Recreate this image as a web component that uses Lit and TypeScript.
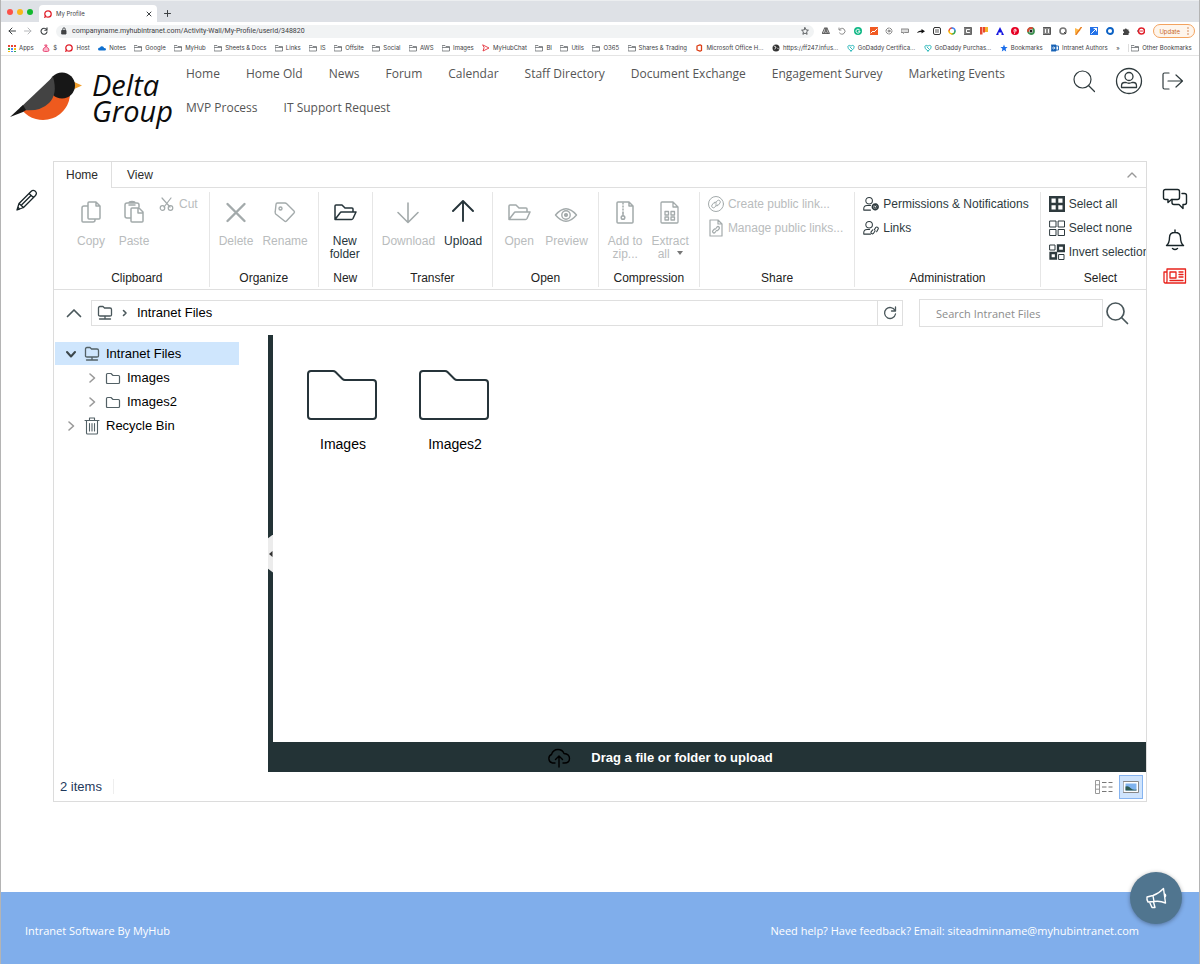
import { LitElement, html, css, svg, nothing, TemplateResult, SVGTemplateResult } from "lit";
import { customElement } from "lit/decorators.js";
import { classMap } from "lit/directives/class-map.js";

/* ---------- icons ---------- */

const draw = (w: number, h: number, body: SVGTemplateResult, width = 1): TemplateResult => html`
  <svg width=${w} height=${h} viewBox="0 0 ${w} ${h}" fill="none" stroke="currentColor"
    stroke-width=${width} stroke-linecap="round" stroke-linejoin="round" aria-hidden="true">${body}</svg>`;

const icons = {
  copy: () => draw(22, 24, svg`<path d="M9 2h7l4 4v12a1 1 0 0 1-1 1H9a1 1 0 0 1-1-1V3a1 1 0 0 1 1-1zM16 2v4h4M8 6H4a2 2 0 0 0-2 2v13a1 1 0 0 0 1 1h10a2 2 0 0 0 2-2v-1"/>`, 1.5),
  paste: () => draw(22, 24, svg`<path d="M8 18H4a2 2 0 0 1-2-2V5a2 2 0 0 1 2-2h10a2 2 0 0 1 2 2v2M6 5h6M6 3a3 1.500 0 0 1 6 0M9 8h7l4 4v9a1 1 0 0 1-1 1H9a1 1 0 0 1-1-1V9a1 1 0 0 1 1-1zM15 8v5h5"/>`, 1.5),
  cut: () => draw(16, 16, svg`<path d="M3 2l8 9M12 2L5 11"/><circle cx="3.500" cy="12" r="2.300"/><circle cx="11.500" cy="12" r="2.300"/>`, 1.2),
  remove: () => draw(22, 24, svg`<path d="M2.500 4l17 17M19.500 4L2.500 21"/>`, 2.4),
  tag: () => draw(24, 24, svg`<path d="M3 4.500q0-1.500 1.500-1.500H12q1 0 1.700.7l7.300 7.300q1 1 0 2l-7.500 8q-1 1-2 0L2.700 14q-.7-1-.5-2z"/><circle cx="7.500" cy="8.500" r="1.500"/>`, 1.4),
  folderOpen: () => draw(24, 24, svg`<path d="M2 19V6q0-1 1-1h6l3 3h7q1 0 1 1v3M2 19.500h16.500q1 0 1.500-1l3-6.500H8.500q-1 0-1.500 1z"/>`, 1.5),
  down: () => draw(24, 24, svg`<path d="M12 3v19M2 12.500l10 10 10-10"/>`, 1.6),
  up: () => draw(24, 24, svg`<path d="M12 21V1.200M2 11l10-10 10 10"/>`, 1.9),
  eye: () => draw(24, 24, svg`<path d="M1.500 15Q12 2.500 22.500 15 12 27.500 1.500 15z"/><circle cx="12" cy="15" r="4.200"/><circle cx="12" cy="15" r="1.400" fill="currentColor"/>`, 1.4),
  zip: () => draw(22, 24, svg`<path d="M4 2h11l4 4v16a1 1 0 0 1-1 1H4a1 1 0 0 1-1-1V3a1 1 0 0 1 1-1zM15 2v4h4"/><path d="M9 3v10" stroke-dasharray="1 2"/><path d="M9 13v3"/><circle cx="9" cy="17.500" r="1.800"/>`, 1.5),
  extract: () => draw(22, 24, svg`<path d="M3 2h11l5 5v15a1 1 0 0 1-1 1H3a1 1 0 0 1-1-1V3a1 1 0 0 1 1-1zM14 2v5h5"/><path d="M6 11.500h3.500v3.500H6zM12 11.500h3.500v3.500H12zM6 17h3.500v3H6zM12 17h3.500v3H12z"/>`, 1.3),
  linkCircle: () => draw(16, 18, svg`<circle cx="8" cy="9" r="7.500"/><path d="M7 8.500l2.500-3a1.800 1.800 0 0 1 2.500 2.500L10 10.500q-1.500 1-2.500-.5M9 9.500l-2.500 3A1.800 1.800 0 0 1 4 10l2-2.500q1.500-1 2.500.5"/>`),
  linkPage: () => draw(16, 18, svg`<path d="M2 1h8l4 4v12H2zM10 1v4h4"/><path d="M7.500 10l1.500-2a1.300 1.300 0 0 1 2 2l-1.500 1.700M8.500 11.500l-1.500 2a1.300 1.300 0 0 1-2-2L6.500 10"/>`, 1.2),
  userGear: () => draw(17, 16, svg`<circle cx="6.500" cy="4.500" r="3.500"/><path d="M8 14.500H.8V13q0-3.500 3.500-3.500H8"/><circle cx="13" cy="11" r="3" stroke-width="1.800" stroke-dasharray="1.600 .8"/><circle cx="13" cy="11" r="1.400"/>`, 1.1),
  userLink: () => draw(17, 16, svg`<circle cx="6.500" cy="4.500" r="3.500"/><path d="M8 14.500H.8V13q0-3.500 3.500-3.500H7"/><path d="M12 10l1.500-2.500a1.500 1.500 0 0 1 2.300 2L14.500 12M13 11l-2 2.800a1.500 1.500 0 0 1-2.200-2L10.300 10"/>`, 1.1),
  selectAll: () => draw(16, 16, svg`<path d="M1.200 1.200h13.600v13.600H1.200zM8 1v14M1 8h14" stroke-width="2.600" stroke-linejoin="miter"/>`),
  selectNone: () => draw(16, 16, svg`<path d="M1 1h6v6H1zM9.500 1h6v6h-6zM1 9.500h6v6H1zM9.500 9.500h6v6h-6z"/>`, 1),
  invert: () => draw(16, 16, svg`<path d="M1 1h5v5H1zM10 10.500h5v5h-5z"/><path d="M9 1.500h6v5.500H9zM1.500 9h5.500v5.500H1.500z" stroke-width="2.300" stroke-linejoin="miter"/>`, 1),
  network: () => draw(16, 16, svg`<path d="M1.500 10V3q0-1.500 1.500-1.500h3l1.500 1.500H13q1.500 0 1.500 1.500V10q0 1-1.500 1H3q-1.500 0-1.500-1zM8 11v3M2.500 14h11"/>`, 1.3),
  folder: () => draw(16, 16, svg`<path d="M1.500 12.500v-8q0-1 1-1h3.500l2 2h5.500q1 0 1 1v6q0 1-1 1h-11q-1 0-1-1z"/>`, 1.2),
  bin: () => draw(16, 18, svg`<path d="M1 3.500h14M2.500 3.500V16q0 1 1 1h9q1 0 1-1V3.500M5.500 3V1h5v2M5.500 6.500v7.500M8 6.500v7.500M10.500 6.500v7.500"/>`, 1.1),
  bigFolder: () => draw(75, 52, svg`<path d="M2 47V5q0-3 3-3h22q1.500 0 2.500 1l7 7q1 1 2.500 1h28q3 0 3 3v33q0 3-3 3H5q-3 0-3-3z"/>`, 2),
  chevUp: () => draw(16, 10, svg`<path d="M1.500 8.500L8 2l6.500 6.500"/>`, 1.7),
  chevSmallUp: () => draw(10, 8, svg`<path d="M1 6l4-4 4 4"/>`, 1.4),
  chevRight: () => draw(10, 12, svg`<path d="M3 2l4.500 4L3 10"/>`, 1.6),
  chevDown: () => draw(10, 12, svg`<path d="M1 4l4 4.500L9 4"/>`, 2),
  crumb: () => draw(6, 8, svg`<path d="M1.500 1.500L4 4 1.500 6.500"/>`, 1.6),
  refresh: () => draw(14, 14, svg`<path d="M12 4.500A5.500 5.500 0 1 0 12.500 8M12.500 1v4h-4"/>`, 1.3),
  magnifier: (width = 1.5) => draw(24, 24, svg`<circle cx="10.500" cy="10.500" r="8.500"/><path d="M16.500 16.500l6 6"/>`, width),
  user: () => draw(28, 28, svg`<circle cx="14" cy="14" r="12.500"/><circle cx="14" cy="9.500" r="4"/><path d="M6.500 20.500v-1.500q0-3.500 3-3.500h1.500q3 1.500 6 0h1.500q3 0 3 3.500v1.500z"/>`, 1.3),
  logout: () => draw(22, 18, svg`<path d="M7 1H2.500Q1 1 1 2.500v13Q1 17 2.500 17H7M6 9h14.500M14 3l6.500 6-6.500 6"/>`, 1.2),
  pencil: () => draw(22, 22, svg`<path d="M1 21l2-6.500L15 2.500q2-2 4-.5 2.500 2 .5 4.500L7.500 18.500zM3 14.500l4.500 4M13 4.500l4.500 4M5.500 16l9.500-9.500M1 21l2.500-.8-1.500-2z"/>`, 1.3),
  chat: () => draw(26, 24, svg`<path d="M3.500 1.500h12q2 0 2 2v6q0 2-2 2h-6L6 14.500v-3H3.500q-2 0-2-2v-6q0-2 2-2z"/><path d="M20 5.500h2.500q2 0 2 2v7q0 2-2 2h-1.500v4l-4-4h-5q-2 0-2-2v-3"/>`, 1.4),
  bell: () => draw(20, 22, svg`<path d="M10 1v2M1.500 16.500q3-2.500 3-8 0-5 5.500-5t5.500 5q0 5.500 3 8zM7.500 19.500q2.500 2 5 0"/>`, 1.4),
  news: () => draw(24, 16, svg`<path d="M4 1h18.500v14H3q-2 0-2-1.500V4h3zM4 4v9q0 1.500-1 2M7 4h6v6H7zM16 4h4M16 6.500h4M16 9h4M7 12.500h13"/>`, 1.3),
  cloud: () => draw(24, 20, svg`<path d="M8 15H5.500a4.500 4.500 0 0 1-1-8.500Q6 1.500 11 1.500q4.500 0 6 4 5.500.5 5.500 5 0 4.500-5 4.500H16M12 19V8.500M8.500 11.500L12 8l3.500 3.500"/>`, 1.4),
  list: () => draw(18, 14, svg`<g stroke-linecap="butt"><path d="M.5.500h4v13h-4zM.5 4.800h4M.5 9.200h4" stroke="#999" /><path d="M7 2.500h4.500M13.500 2.500h4M7 7h4.500M13.500 7h4M7 11.500h4.500M13.500 11.500h4" stroke="#777"/></g>`, 1),
  thumbs: () => draw(16, 12, svg`<path d="M.5.500h15v11H.5z" fill="#fff" stroke="#888"/><path d="M2.500 2.500h11v7h-11z" fill="#7fb3ee" stroke="none"/><path d="M2.500 9.500V5.500q3-1 5 1.500t6 1.500v1z" fill="#2f5b52" stroke="none"/>`, 1),
  horn: () => draw(22, 22, svg`<path d="M2 10l6-1.500Q14 6.500 18.500 1.500l2 14.500Q15 13.500 9 14.500l-6 .5q-1.500-2-1-5zM8 8.500l1 6M4.500 15l2.500 5.500h3L8.500 15M19.500 7q2 1 .5 3"/>`, 1.4),
  bird: () => html`<svg width="72" height="52" viewBox="0 0 72 52" aria-hidden="true">
    <path d="M62 9l10 4.500-10 4.500z" fill="#f2a02e"/>
    <path d="M60 20A27 27 0 0 1 12 38L44 14z" fill="#ee5a1e"/>
    <circle cx="52" cy="13.500" r="13" fill="#171717"/>
    <path d="M43 4.700Q48 22 39 31 30 40 13 38L10 36z" fill="#434343"/>
    <path d="M0 45l13-12 3 5-3 2z" fill="#171717"/></svg>`,
};

/* ---------- browser glyphs ---------- */

type Mark = "apps" | "bag" | "ring" | "drive" | "folder" | "play" | "office" | "globe" | "heart" | "star" | "blue";

const mark = (kind: Mark): TemplateResult => {
  const shapes: Record<Mark, SVGTemplateResult> = {
    apps: svg`<g fill="#e94335" stroke="none"><path d="M0 1h2v2H0zM3 1h2v2H3zM6 1h2v2H6z"/><path fill="#34a853" d="M0 4h2v2H0zM6 7h2v1H6z"/><path fill="#4285f4" d="M3 4h2v2H3zM3 7h2v1H3z"/><path fill="#fbbc05" d="M6 4h2v2H6zM0 7h2v1H0z"/></g>`,
    bag: svg`<path d="M3 1h2L4.500 3Q7 4 7 6q0 1.500-1.500 1.500h-3Q1 7.500 1 6q0-2 2.500-3z" fill="#fbb6cb" stroke="#e8436f"/>`,
    ring: svg`<circle cx="4" cy="4" r="3.200" stroke="#e0202b" stroke-width="1.300"/><path d="M.8 7.500l.8-2" stroke="#e0202b" stroke-width="1.300"/>`,
    drive: svg`<path d="M1.500 6.500Q0 6.500 0 5t2-1.500Q3 1.500 5 2.500q1 .5 1 1.500 2 0 2 1.300T6.500 6.500z" fill="#0f70d0" stroke="none"/>`,
    folder: svg`<path d="M.5 1.500h2.500l1 1h3.500v4.500h-7zM.5 3.500h7" stroke="#6b6e72" stroke-width=".8"/>`,
    play: svg`<path d="M1 1l6 3-6 3 1-3z" stroke="#e3323c" />`,
    office: svg`<path d="M2 2l3-1.200L6.500 1.500v5L5 7.200 2 6z" stroke="#dc3e15" stroke-width="1.300"/>`,
    globe: svg`<circle cx="4" cy="4" r="3.500" fill="#333" stroke="none"/><path d="M2 2l2 1-1 2M5.500 4l1 1" stroke="#fff" stroke-width=".8"/>`,
    heart: svg`<path d="M4 7Q0 4.500.8 2.300 2 .5 4 2 6 .5 7.200 2.300 8 4.500 4 7zM3 3l2 2" stroke="#26b5b8"/>`,
    star: svg`<path d="M4 .5l1 2.400 2.600.2-2 1.700.6 2.600L4 6 1.800 7.400l.6-2.600-2-1.700L3 2.900z" fill="#1a6dea" stroke="none"/>`,
    blue: svg`<path d="M.5 1h4.500v6h-4.500z" fill="#1762b5" stroke="#1762b5"/><circle cx="2.700" cy="4" r="1" stroke="#fff" stroke-width=".7"/><path d="M5.500 2h2v4h-2" stroke="#1762b5"/>`,
  };
  return draw(8, 8, shapes[kind], 0.9);
};

const bookmarks: [Mark, string][] = [
  ["apps", "Apps"], ["bag", "$"], ["ring", "Host"], ["drive", "Notes"], ["folder", "Google"], ["folder", "MyHub"],
  ["folder", "Sheets & Docs"], ["folder", "Links"], ["folder", "IS"], ["folder", "Offsite"], ["folder", "Social"],
  ["folder", "AWS"], ["folder", "Images"], ["play", "MyHubChat"], ["folder", "BI"], ["folder", "Utils"],
  ["folder", "O365"], ["folder", "Shares & Trading"], ["office", "Microsoft Office H..."], ["globe", "https://ff247.infus..."],
  ["heart", "GoDaddy Certifica..."], ["heart", "GoDaddy Purchas..."], ["star", "Bookmarks"], ["blue", "Intranet Authors"],
];

const extensions: SVGTemplateResult[] = [
  svg`<path d="M3 1h2l2.500 5.500h-7zM3 1l2.500 5.500M5 1L2.500 6" fill="#bbb" stroke="#555" stroke-width=".9"/>`,
  svg`<path d="M1.500 2.500A3 3 0 1 1 1.500 6M1 1v2h2" stroke="#888"/>`,
  svg`<circle cx="4" cy="4" r="4" fill="#11b886" stroke="none"/><path d="M5.500 2.800A2 2 0 1 0 6 4.200H4.500" stroke="#fff"/>`,
  svg`<path d="M0 0h8v8H0z" fill="#f15a22" stroke="none"/><path d="M1 6l2-2 1 1 3-3" stroke="#fff"/>`,
  svg`<circle cx="4" cy="4" r="3" stroke="#888" stroke-dasharray="2 1"/><circle cx="4" cy="4" r="1" stroke="#777"/>`,
  svg`<path d="M.5 2h7v3.500h-4l-1 1v-1h-2z" fill="#ddd" stroke="#888"/>`,
  svg`<path d="M0 6Q1 3.500 4.500 3.500V2L8 4.300 4.500 6.500V5Q2 5 0 6z" fill="#111" stroke="none"/>`,
  svg`<rect x=".5" y=".5" width="7" height="7" rx="1.500" stroke="#333"/><path d="M3 2.500v3M5 2.500v3" stroke="#555"/>`,
  svg`<path d="M1 4a3 3 0 0 1 3-3" stroke="#ea4335" stroke-width="1.400"/><path d="M4 1a3 3 0 0 1 3 3" stroke="#4285f4" stroke-width="1.400"/><path d="M7 4a3 3 0 0 1-3 3" stroke="#34a853" stroke-width="1.400"/><path d="M4 7a3 3 0 0 1-3-3" stroke="#fbbc05" stroke-width="1.400"/>`,
  svg`<path d="M.5.500h7v7h-7z" fill="#777" stroke="#666"/><path d="M5.500 2.500h-3v3h3" stroke="#fff"/>`,
  svg`<path d="M0 0h2.500v7.500H0zM3 0h2v5.500H3z" fill="#e8492f" stroke="none"/><path d="M5 0h3v5H5z" fill="#f5b32a" stroke="none"/>`,
  svg`<path d="M4 0l4 8H5.500V5.500h-3V8H0z" fill="#1414e0" stroke="none"/>`,
  svg`<circle cx="4" cy="4" r="4" fill="#e60023" stroke="none"/><path d="M3.500 6.500L4.500 3M3 4.500Q2.500 2 4 2t1.300 2" stroke="#fff" stroke-width=".8"/>`,
  svg`<circle cx="4" cy="4" r="3" stroke="#3c8f4f" stroke-width="1.800"/><path d="M1 4a3 3 0 0 1 4-2.800" stroke="#e24331" stroke-width="1.800"/><circle cx="4" cy="4" r="1.500" fill="#222" stroke="none"/>`,
  svg`<path d="M.5.500h7v7h-7z" fill="#888" stroke="#555"/><path d="M2.500 2.500v3M5.500 2.500v3" stroke="#fff"/>`,
  svg`<circle cx="4" cy="4" r="3" stroke="#777" stroke-width="1.600"/><path d="M5.500 5.500l1 1" stroke="#222"/>`,
  svg`<path d="M1 1l5.500 2.500L1 7z" fill="#fdb94a" stroke="none"/><path d="M7.500 0L2 7.500" stroke="#e77b1c" stroke-width="1.400"/>`,
  svg`<path d="M0 0h8v8H0z" fill="#2472e8" stroke="none"/><path d="M1.500 6.500l5-5M4 1.500h2.500V4" stroke="#fff"/>`,
  svg`<circle cx="4" cy="4" r="3" stroke="#0b61c4" stroke-width="1.900"/>`,
  svg`<path d="M1 2.500h1.500a1.300 1.300 0 0 1 2.500 0h1.500v1.500a1.300 1.300 0 0 1 0 2.500V8H1V6.300a1 1 0 0 0 0-2z" fill="#444" stroke="none"/>`,
  svg`<circle cx="4.500" cy="4" r="3" stroke="#e0202b" stroke-width="1.600"/><path d="M-.5 4h1" stroke="#333"/><path d="M3.500 4h2" stroke="#e0202b"/>`,
];

@customElement("browser-bar")
class BrowserBar extends LitElement {
  static styles = css`
    :host { display: block; font-family: Inter, Roboto, "Liberation Sans", sans-serif; color: #3c4043; }
    button, a, input { font: inherit; color: inherit; }
    button { border: 0; background: none; padding: 0; display: flex; align-items: center; }
    svg { flex: none; display: block; }
    .tabs { display: flex; align-items: flex-end; height: 22px; box-sizing: border-box; background: #dee1e6; border-top: 1px solid #eceef0; padding-left: 6px; }
    .lights { display: flex; gap: 4px; padding: 0 6px 7px 0; }
    .light { width: 6px; height: 6px; border-radius: 50%; }
    .red { background: #fc5149; } .amber { background: #f9b71a; } .green { background: #12b82e; }
    .tab { display: flex; align-items: center; gap: 4px; height: 17px; width: 118px; box-sizing: border-box; padding: 0 5px; background: #fff; border-radius: 4px 4px 0 0; font-size: 6px; }
    .tab span { flex: 1; }
    .new { height: 17px; padding-left: 7px; }
    .tools { display: flex; align-items: center; gap: 8px; height: 18px; padding: 0 4px 0 7px; background: #fff; }
    .omni { flex: 1; display: flex; align-items: center; gap: 5px; height: 13px; border-radius: 7px; background: #f1f3f4; padding: 0 5px; }
    .omni input { flex: 1; min-width: 0; border: 0; padding: 0; background: none; outline: 0; font-family: Roboto, sans-serif; font-size: 7px; }
    .extensions { display: flex; justify-content: space-between; width: 323px; }
    .update { box-sizing: border-box; height: 14px; border: 1px solid #f3a35f; border-radius: 7px; background: #fef5ec; color: #c7682a; font-size: 6px; padding: 0 5px; gap: 7px; }
    .marks { display: flex; align-items: center; justify-content: space-between; height: 15px; padding: 0 7px; background: #fff; border-bottom: 1px solid #e4e4e4; font-size: 6px; white-space: nowrap; }
    .marks a { display: flex; align-items: center; gap: 3px; text-decoration: none; }
    .last { border-left: 1px solid #ddd; padding-left: 2px; }
  `;
  render() {
    return html`
      <div class="tabs">
        <div class="lights"><i class="light red"></i><i class="light amber"></i><i class="light green"></i></div>
        <div class="tab">${mark("ring")}<span>My Profile</span>
          <button aria-label="Close tab">${draw(6, 6, svg`<path d="M1 1l4 4M5 1L1 5"/>`, 1)}</button></div>
        <button class="new" aria-label="New tab">${draw(7, 7, svg`<path d="M3.500.500v6M.5 3.500h6"/>`, 1)}</button>
      </div>
      <div class="tools">
        <button aria-label="Back">${draw(8, 8, svg`<path d="M7.500 4h-6.500M4 1L1 4l3 3"/>`, 1)}</button>
        <button aria-label="Forward">${draw(8, 8, svg`<path d="M.5 4h6.500M4 1l3 3-3 3" stroke="#b5b7ba"/>`, 1)}</button>
        <button aria-label="Reload">${draw(8, 8, svg`<path d="M6.500 2.500A3 3 0 1 0 7 4.800M7 .8v2.400H4.800"/>`, 1.1)}</button>
        <div class="omni">
          ${draw(6, 8, svg`<path d="M1 3.500h4v3.500H1z" fill="#444"/><path d="M1.800 3.500V2a1.200 1.200 0 0 1 2.400 0v1.500"/>`, 0.9)}
          <input aria-label="Address" value="companyname.myhubintranet.com/Activity-Wall/My-Profile/userId/348820" />
          ${draw(8, 8, svg`<path d="M4 .7l1 2.200 2.400.3-1.800 1.600.5 2.500L4 6.100 1.900 7.300l.5-2.500L.6 3.200 3 2.900z"/>`, 0.8)}
        </div>
        <div class="extensions">${extensions.map((e) => draw(8, 8, e, 1))}</div>
        <button class="update">Update ${draw(2, 8, svg`<path d="M1 1v0M1 4v0M1 7v0"/>`, 1.4)}</button>
      </div>
      <nav class="marks" aria-label="Bookmarks">
        ${bookmarks.map(([k, t]) => html`<a href="#">${mark(k)}${t}</a>`)}
        <span>»</span>
        <a class="last" href="#">${mark("folder")}Other Bookmarks</a>
      </nav>`;
  }
}

/* ---------- file manager ---------- */

interface Cmd { icon: () => TemplateResult; text: string; off?: boolean; menu?: boolean; }
interface Group { name: string; large?: Cmd[]; small?: Cmd[]; }

const groups: Group[] = [
  { name: "Clipboard", large: [{ icon: icons.copy, text: "Copy", off: true }, { icon: icons.paste, text: "Paste", off: true }], small: [{ icon: icons.cut, text: "Cut", off: true }] },
  { name: "Organize", large: [{ icon: icons.remove, text: "Delete", off: true }, { icon: icons.tag, text: "Rename", off: true }] },
  { name: "New", large: [{ icon: icons.folderOpen, text: "New\nfolder" }] },
  { name: "Transfer", large: [{ icon: icons.down, text: "Download", off: true }, { icon: icons.up, text: "Upload" }] },
  { name: "Open", large: [{ icon: icons.folderOpen, text: "Open", off: true }, { icon: icons.eye, text: "Preview", off: true }] },
  { name: "Compression", large: [{ icon: icons.zip, text: "Add to\nzip...", off: true }, { icon: icons.extract, text: "Extract\nall", off: true, menu: true }] },
  { name: "Share", small: [{ icon: icons.linkCircle, text: "Create public link...", off: true }, { icon: icons.linkPage, text: "Manage public links...", off: true }] },
  { name: "Administration", small: [{ icon: icons.userGear, text: "Permissions & Notifications" }, { icon: icons.userLink, text: "Links" }] },
  { name: "Select", small: [{ icon: icons.selectAll, text: "Select all" }, { icon: icons.selectNone, text: "Select none" }, { icon: icons.invert, text: "Invert selection" }] },
];

@customElement("file-manager")
class FileManager extends LitElement {
  static styles = css`
    :host { display: flex; flex-direction: column; min-width: 0; box-sizing: border-box; border: 1px solid #dcdcdc; background: #fff; font-family: "Liberation Sans", Arial, sans-serif; font-size: 12px; color: #2b2b2b; }
    button { border: 0; background: none; padding: 0; font: inherit; color: inherit; }
    svg { display: block; flex: none; }
    .tabs { display: flex; height: 25px; border-bottom: 1px solid #dfdfdf; }
    .tab { padding: 0 15px; }
    .tab.on { box-sizing: border-box; height: 26px; padding: 0 13px 0 12px; border-right: 1px solid #dfdfdf; background: #fff; }
    .fold { margin-left: auto; padding: 0 9px; color: #999; }
    .ribbon { display: flex; height: 102px; box-sizing: border-box; padding: 4px 0 2px 11px; border-bottom: 1px solid #dfdfdf; overflow: hidden; }
    .group { flex: none; display: flex; flex-direction: column; padding: 0 5px; border-right: 1px solid #e6e6e6; }
    .group:last-child { border: 0; }
    .commands { flex: 1; display: flex; }
    .caption { text-align: center; line-height: 18px; color: #222; }
    .large { display: flex; flex-direction: column; align-items: center; min-width: 43px; padding: 8px 5px 0 4px; gap: 11px; line-height: 13px; white-space: pre; color: #26343a; }
    .large:disabled, .small:disabled { color: #b9bcbd; }
    .large:disabled svg, .small:disabled svg { color: #a3aaab; }
    .small { display: flex; align-items: center; gap: 4px; height: 24px; padding: 0 6px 0 3px; white-space: nowrap; color: #2e3a3e; }
    .small svg { width: 16px; }
    .caret { display: inline-block; margin: 0 0 3px 7px; border: 3px solid transparent; border-top: 4px solid #777; border-bottom: 0; }
    .bar { display: flex; align-items: center; height: 45px; padding: 0 17px 0 12px; color: #4a575b; }
    .path { flex: 1; display: flex; align-items: stretch; height: 24px; margin: 0 16px 0 9px; border: 1px solid #dfdfdf; }
    .crumbs { flex: 1; display: flex; align-items: center; gap: 9px; padding-left: 5px; font-size: 13px; }
    .crumbs button { color: #000; }
    .reload { padding: 0 5px; border-left: 1px solid #dfdfdf; }
    .search { display: flex; align-items: center; gap: 2px; }
    .search input { width: 184px; height: 28px; box-sizing: border-box; border: 1px solid #dfdfdf; padding: 2px 16px 0; font: 11px "Open Sans", sans-serif; outline: 0; }
    .search input::placeholder { color: #8c8c8c; }
    .body { flex: 1; display: flex; }
    .tree { flex: none; width: 214px; box-sizing: border-box; padding: 7px 29px 0 1px; font-size: 13px; color: #111; }
    .row { display: flex; align-items: center; width: 100%; height: 23px; margin-bottom: 1px; padding-left: 11px; gap: 6px; color: #536166; }
    .row.child { padding-left: 32px; }
    .row.on { background: #cfe6fd; }
    .row svg:first-child { margin-right: 2px; color: #999; }
    .row.on svg:first-child { color: #3c474b; }
    .row span { color: #000; }
    .split { flex: none; width: 5px; background: #233336; display: flex; align-items: center; }
    .grip { width: 5px; height: 38px; background: #ececec; color: #333; clip-path: polygon(0 10%, 100% 0, 100% 100%, 0 90%); display: flex; align-items: center; }
    .files { flex: 1; display: flex; flex-direction: column; min-width: 0; }
    .tiles { flex: 1; display: flex; flex-wrap: wrap; align-content: flex-start; padding: 34px 14px; }
    .tile { display: flex; flex-direction: column; align-items: center; gap: 14px; width: 112px; font-size: 14px; line-height: 18px; color: #000; }
    .tile svg { color: #26343a; }
    .drop { display: flex; align-items: center; justify-content: center; gap: 20px; height: 30px; background: #233336; color: #000; font-size: 13px; font-weight: bold; padding-right: 99px; }
    .drop span { color: #fff; }
    .drop svg { margin-top: 2px; }
    .status { display: flex; align-items: center; height: 29px; padding: 0 3px 0 6px; font-size: 13px; color: #1e395b; }
    .count { padding-right: 11px; border-right: 1px solid #eee; }
    .views { margin-left: auto; display: flex; align-items: center; gap: 6px; }
    .views .on { display: grid; place-items: center; width: 24px; height: 24px; box-sizing: border-box; border: 1px solid #86b4f0; background: #cfe4fd; }
  `;
  large(c: Cmd) {
    return html`<button class="large" ?disabled=${!!c.off}>${c.icon()}<span>${c.text}${c.menu ? html`<i class="caret"></i>` : nothing}</span></button>`;
  }
  small(c: Cmd) {
    return html`<button class="small" ?disabled=${!!c.off}>${c.icon()}${c.text}</button>`;
  }
  row(icon: () => TemplateResult, text: string, kind = "") {
    return html`<button class=${classMap({ row: true, on: kind === "on", child: kind === "child" })} role="treeitem">
      ${kind === "on" ? icons.chevDown() : icons.chevRight()}${icon()}<span>${text}</span></button>`;
  }
  render() {
    return html`
      <div class="tabs" role="tablist">
        <button class="tab on" role="tab" aria-selected="true">Home</button>
        <button class="tab" role="tab" aria-selected="false">View</button>
        <button class="fold" aria-label="Collapse ribbon">${icons.chevSmallUp()}</button>
      </div>
      <div class="ribbon">
        ${groups.map((g) => html`<section class="group">
          <div class="commands">
            ${g.large?.map((c) => this.large(c))}
            ${g.small ? html`<div>${g.small.map((c) => this.small(c))}</div>` : nothing}
          </div>
          <div class="caption">${g.name}</div>
        </section>`)}
      </div>
      <div class="bar">
        <button aria-label="Up one level">${icons.chevUp()}</button>
        <div class="path">
          <div class="crumbs">${icons.network()}${icons.crumb()}<button>Intranet Files</button></div>
          <button class="reload" aria-label="Refresh">${icons.refresh()}</button>
        </div>
        <div class="search">
          <input type="search" placeholder="Search Intranet Files" aria-label="Search Intranet Files" />
          <button aria-label="Search">${icons.magnifier(1.7)}</button>
        </div>
      </div>
      <div class="body">
        <div class="tree" role="tree">
          ${this.row(icons.network, "Intranet Files", "on")}
          ${this.row(icons.folder, "Images", "child")}
          ${this.row(icons.folder, "Images2", "child")}
          ${this.row(icons.bin, "Recycle Bin")}
        </div>
        <div class="split"><button class="grip" aria-label="Collapse folder tree">${draw(5, 6, svg`<path d="M4.500 0L1 3l3.500 3z" fill="currentColor" stroke="none"/>`)}</button></div>
        <div class="files">
          <div class="tiles">
            ${["Images", "Images2"].map((n) => html`<button class="tile">${icons.bigFolder()}${n}</button>`)}
          </div>
          <div class="drop">${icons.cloud()}<span>Drag a file or folder to upload</span></div>
        </div>
      </div>
      <div class="status">
        <span class="count">2 items</span>
        <div class="views">
          <button aria-label="Details view">${icons.list()}</button>
          <button class="on" aria-label="Thumbnails view">${icons.thumbs()}</button>
        </div>
      </div>`;
  }
}

/* ---------- page ---------- */

const links = ["Home", "Home Old", "News", "Forum", "Calendar", "Staff Directory", "Document Exchange", "Engagement Survey", "Marketing Events", "MVP Process", "IT Support Request"];

@customElement("app-root")
class AppRoot extends LitElement {
  static styles = css`
    :host { display: flex; flex-direction: column; min-height: 100vh; box-sizing: border-box; border: 0 solid #b4b4b4; border-width: 0 1px; background: #fff; font-family: "Open Sans", sans-serif; font-size: 12px; color: #555; }
    a { color: inherit; text-decoration: none; }
    button { border: 0; background: none; padding: 0; color: inherit; display: block; }
    svg { display: block; flex: none; }
    header { display: flex; align-items: flex-start; min-height: 105px; }
    .logo { flex: none; display: flex; gap: 10px; width: 176px; padding: 16px 0 0 9px; color: #0c0c0c; font-size: 29px; line-height: 26px; font-style: italic; }
    .logo span { width: min-content; }
    nav { flex: 1; display: flex; flex-wrap: wrap; column-gap: 26px; line-height: 34px; padding-top: 1px; }
    .actions { flex: none; display: flex; align-items: center; gap: 19px; padding: 11px 15px 0 0; color: #2f3a3d; }
    main { flex: 1; display: flex; padding-bottom: 90px; }
    file-manager { flex: 1; }
    .rail { flex: none; width: 52px; display: flex; flex-direction: column; align-items: center; gap: 17px; padding: 27px 0 0 4px; box-sizing: border-box; color: #182428; }
    .left { padding: 28px 0 0; }
    .alert { color: #e8231c; }
    footer { position: relative; display: flex; justify-content: space-between; align-items: center; height: 72px; padding: 4px 60px 0 24px; box-sizing: border-box; background: #80aeeb; color: #fff; font-size: 11px; }
    .fab { position: absolute; right: 17px; top: -20px; width: 52px; height: 52px; border-radius: 50%; background: #50758f; color: #fff; display: grid; place-items: center; box-shadow: 0 1px 4px rgba(0, 0, 0, 0.35); }
  `;
  render() {
    return html`
      <browser-bar></browser-bar>
      <header>
        <a class="logo" href="#">${icons.bird()}<span>Delta Group</span></a>
        <nav aria-label="Main">${links.map((l) => html`<a href="#">${l}</a>`)}</nav>
        <div class="actions">
          <button aria-label="Search">${icons.magnifier(1.2)}</button>
          <button aria-label="Profile">${icons.user()}</button>
          <button aria-label="Sign out">${icons.logout()}</button>
        </div>
      </header>
      <main>
        <div class="rail left"><button aria-label="Edit">${icons.pencil()}</button></div>
        <file-manager></file-manager>
        <div class="rail">
          <button aria-label="Chat">${icons.chat()}</button>
          <button aria-label="Notifications">${icons.bell()}</button>
          <button class="alert" aria-label="News">${icons.news()}</button>
        </div>
      </main>
      <footer>
        <a href="#">Intranet Software By MyHub</a>
        <span>Need help? Have feedback? Email: siteadminname@myhubintranet.com</span>
        <button class="fab" aria-label="Announcements">${icons.horn()}</button>
      </footer>`;
  }
}
